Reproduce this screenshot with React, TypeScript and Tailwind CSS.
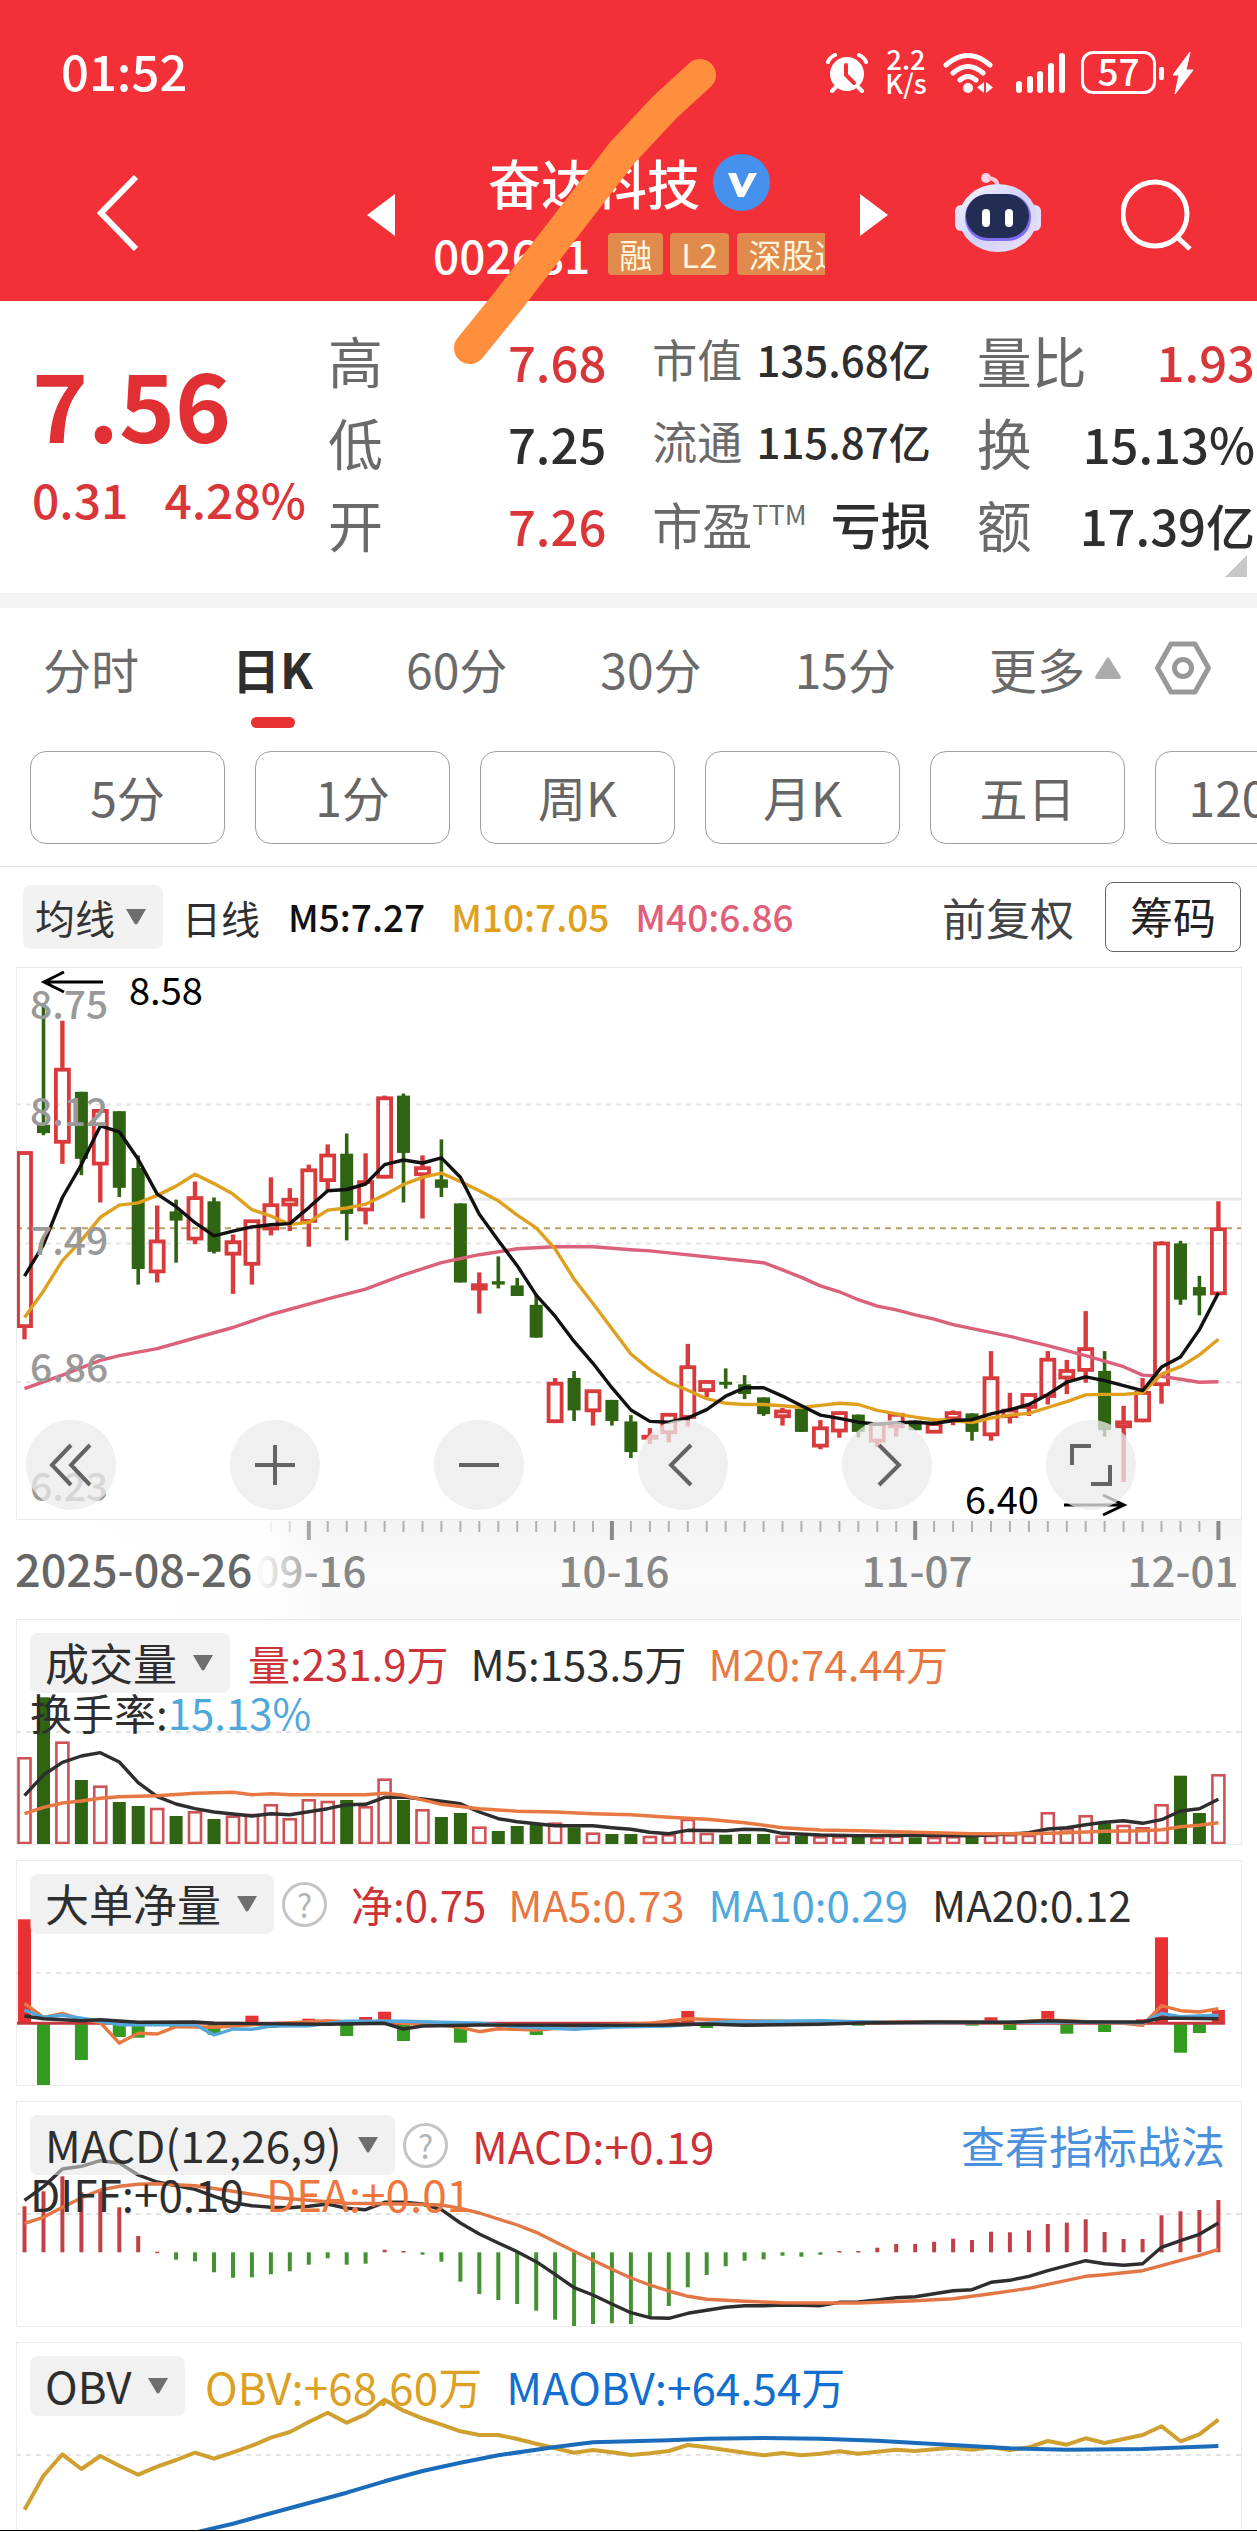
import React from "react";

type Pt = [number, number];
type Scale = (v: number) => number;

/* ---------- shared geometry ---------- */

const COUNT = 64;
const colX = (i: number) => Math.round((24.5 + i * 18.95) * 10) / 10;
const priceY: Scale = (v) => Math.round((950 + v / 2.376) * 10) / 10;
const volY: Scale = (v) => Math.round((1610 + v / 3) * 10) / 10;
const macdY: Scale = (v) => Math.round((2090 + v / 3) * 10) / 10;

const RED = "#d93a3c";
const GREEN = "#2f6412";

/* ---------- series ---------- */

// up/down, high, body top, body bottom, low
const candles: [string, number, number, number, number][] = [
  ["r", 480, 480, 896, 925], ["g", 126, 415, 435, 440], ["r", 168, 282, 458, 508], ["g", 337, 337, 496, 535],
  ["r", 380, 380, 510, 600], ["g", 383, 383, 565, 587], ["g", 488, 518, 758, 795], ["r", 607, 690, 766, 790],
  ["g", 593, 621, 643, 743], ["r", 550, 587, 688, 699], ["g", 588, 597, 717, 721], ["r", 676, 692, 724, 817],
  ["r", 642, 642, 748, 795], ["r", 540, 604, 664, 678], ["r", 566, 591, 607, 668], ["r", 510, 521, 646, 705],
  ["r", 462, 486, 549, 572], ["g", 436, 484, 627, 690], ["r", 483, 549, 619, 652], ["r", 346, 350, 541, 543],
  ["g", 341, 346, 482, 600], ["r", 488, 516, 535, 638], ["g", 450, 545, 565, 587], ["g", 602, 602, 790, 790],
  ["r", 766, 794, 807, 864], ["g", 728, 787, 795, 804], ["g", 779, 797, 822, 822], ["g", 817, 843, 921, 921],
  ["r", 1017, 1028, 1122, 1124], ["g", 1000, 1017, 1094, 1119], ["r", 1046, 1046, 1096, 1130], ["g", 1069, 1069, 1119, 1130],
  ["g", 1105, 1120, 1193, 1207], ["r", 1136, 1154, 1160, 1174], ["r", 1100, 1102, 1148, 1170], ["r", 936, 989, 1112, 1132],
  ["r", 1022, 1024, 1048, 1062], ["g", 994, 1026, 1032, 1042], ["g", 1010, 1032, 1055, 1067], ["g", 1063, 1063, 1103, 1107],
  ["r", 1088, 1094, 1110, 1130], ["g", 1090, 1090, 1145, 1145], ["r", 1117, 1134, 1180, 1186], ["r", 1098, 1098, 1144, 1159],
  ["g", 1104, 1104, 1145, 1158], ["r", 1122, 1124, 1168, 1181], ["r", 1100, 1102, 1134, 1156], ["g", 1118, 1118, 1141, 1141],
  ["r", 1113, 1124, 1147, 1147], ["r", 1094, 1098, 1115, 1129], ["g", 1101, 1101, 1145, 1166], ["r", 953, 1015, 1153, 1166],
  ["r", 1052, 1092, 1110, 1125], ["r", 1055, 1055, 1088, 1107], ["r", 953, 971, 1062, 1080], ["r", 974, 998, 1018, 1055],
  ["r", 858, 946, 1000, 1028], ["g", 953, 1000, 1141, 1156], ["r", 1083, 1120, 1134, 1264], ["r", 1017, 1050, 1120, 1122],
  ["r", 692, 695, 1034, 1078], ["g", 691, 697, 831, 843], ["g", 774, 801, 821, 868], ["r", 597, 661, 818, 820],
];

const seq = (values: number[]): Pt[] => values.map((v, i) => [i, v]);

const ma5 = seq([
  775, 700, 588, 510, 418, 432, 497, 580, 610, 648, 679, 668, 658, 653, 650, 612, 572, 569, 556, 510, 499, 506, 494, 540,
  628, 690, 750, 820, 870, 930, 982, 1040, 1093, 1120, 1122, 1112, 1092, 1060, 1040, 1040, 1060, 1083, 1105, 1113, 1122,
  1127, 1123, 1122, 1125, 1118, 1116, 1102, 1092, 1080, 1056, 1027, 1014, 1023, 1035, 1047, 991, 967, 902, 815,
]);
const ma10 = seq([
  873, 810, 738, 690, 635, 606, 601, 583, 561, 533, 555, 580, 617, 632, 652, 647, 618, 613, 604, 582, 557, 540, 530, 550,
  572, 596, 630, 660, 710, 782, 840, 900, 960, 997, 1027, 1046, 1066, 1077, 1080, 1080, 1083, 1087, 1082, 1077, 1080,
  1094, 1102, 1110, 1116, 1118, 1123, 1112, 1105, 1101, 1087, 1073, 1057, 1056, 1056, 1052, 1008, 990, 962, 925,
]);
const ma40: Pt[] = [
  [0, 1042], [2, 1010], [4, 975], [5, 964], [7, 947], [9, 922], [11, 897], [13, 866], [16, 829], [18, 806], [20, 772],
  [22, 743], [24, 724], [26, 710], [28, 705], [30, 705], [32, 712], [33, 715], [39, 743], [40, 760], [41, 778], [42, 798],
  [43, 812], [44, 831], [45, 846], [46, 855], [47, 867], [48, 877], [49, 890], [52, 918], [54, 940], [56, 964], [58, 990],
  [59, 1010], [60, 1013], [62, 1027], [63, 1026],
];

const volumes = [
  445, 262, 398, 510, 530, 576, 588, 597, 618, 607, 627, 620, 615, 586, 628, 571, 576, 570, 592, 509, 570, 601, 621, 609,
  653, 663, 648, 645, 641, 652, 671, 672, 672, 681, 676, 630, 672, 674, 672, 672, 680, 677, 682, 682, 680, 684, 680, 682,
  684, 682, 678, 678, 676, 678, 610, 658, 619, 640, 648, 655, 586, 497, 609, 496,
];
const volM5: Pt[] = [
  [0, 557], [1, 495], [2, 457], [3, 438], [4, 428], [5, 456], [6, 518], [7, 560], [8, 582], [9, 596], [10, 606], [11, 612],
  [12, 618], [13, 611], [14, 614], [15, 605], [16, 596], [17, 584], [18, 583], [19, 562], [20, 561], [21, 567], [22, 574],
  [23, 581], [24, 606], [25, 626], [26, 635], [27, 641], [28, 647], [30, 647], [31, 653], [32, 658], [33, 667], [34, 671],
  [35, 661], [37, 662], [38, 658], [39, 659], [40, 670], [42, 675], [44, 677], [47, 676], [50, 677], [52, 672], [53, 668],
  [54, 657], [55, 653], [56, 644], [57, 637], [58, 632], [59, 640], [60, 629], [61, 603], [62, 596], [63, 568],
];
const volM20: Pt[] = [
  [0, 611], [1, 592], [2, 579], [3, 573], [4, 565], [5, 560], [7, 557], [9, 550], [11, 547], [12, 554], [13, 551],
  [14, 554], [18, 554], [19, 550], [20, 556], [22, 583], [24, 596], [26, 604], [28, 606], [30, 611], [32, 614], [34, 622],
  [36, 628], [38, 638], [40, 653], [42, 660], [44, 662], [47, 667], [50, 671], [53, 671], [55, 668], [57, 664], [59, 662],
  [60, 659], [61, 650], [62, 646], [63, 638],
];

const netBars: Pt[] = [
  [0, 928], [1, 1427], [3, 1350], [5, 1281], [6, 1283], [8, 1252], [10, 1274], [12, 1217], [13, 1254], [15, 1226],
  [17, 1278], [18, 1221], [19, 1205], [20, 1293], [23, 1298], [26, 1262], [27, 1275], [35, 1203], [36, 1254], [44, 1247],
  [50, 1247], [51, 1222], [52, 1260], [54, 1203], [55, 1271], [57, 1266], [59, 1228], [60, 982], [61, 1328], [62, 1269],
  [63, 1200],
];
const net5: Pt[] = [
  [0, 1180], [1, 1222], [2, 1210], [3, 1228], [4, 1238], [5, 1299], [6, 1270], [7, 1272], [8, 1250], [10, 1252],
  [12, 1244], [16, 1232], [18, 1238], [19, 1232], [20, 1240], [22, 1246], [23, 1252], [24, 1265], [25, 1256], [27, 1260],
  [29, 1250], [33, 1240], [35, 1226], [38, 1232], [42, 1236], [48, 1236], [52, 1238], [54, 1230], [58, 1240], [59, 1246],
  [60, 1187], [61, 1202], [62, 1206], [63, 1196],
];
const net10: Pt[] = [
  [0, 1200], [1, 1222], [2, 1216], [4, 1234], [5, 1244], [9, 1244], [10, 1275], [11, 1257], [12, 1258], [13, 1248],
  [15, 1247], [17, 1234], [20, 1234], [24, 1240], [26, 1250], [29, 1258], [31, 1251], [34, 1248], [37, 1236], [42, 1232],
  [46, 1238], [55, 1236], [59, 1238], [60, 1210], [61, 1220], [63, 1216],
];
const net20: Pt[] = [
  [0, 1218], [1, 1226], [3, 1232], [4, 1229], [6, 1237], [9, 1236], [10, 1240], [16, 1243], [19, 1240], [20, 1257],
  [21, 1248], [24, 1245], [30, 1246], [34, 1245], [36, 1242], [38, 1246], [42, 1243], [44, 1239], [48, 1236], [52, 1237],
  [54, 1232], [56, 1236], [59, 1236], [60, 1224], [63, 1226],
];

const macdBars = [
  352, 307, 262, 310, 305, 355, 441, 488, 512, 517, 550, 566, 565, 556, 547, 527, 508, 527, 524, 482, 486, 497, 518, 578,
  615, 633, 645, 665, 692, 712, 705, 703, 705, 685, 651, 595, 558, 532, 515, 511, 500, 503, 497, 486, 486, 476, 465, 465,
  458, 449, 453, 428, 430, 424, 405, 401, 391, 429, 450, 450, 379, 367, 363, 333,
];
const diff = seq([
  334, 293, 240, 232, 215, 222, 258, 279, 290, 301, 322, 341, 350, 355, 356, 352, 345, 358, 362, 340, 340, 345, 362, 402,
  435, 462, 488, 518, 556, 596, 618, 645, 671, 686, 688, 673, 664, 655, 650, 650, 648, 649, 650, 640, 639, 633, 626, 623,
  614, 605, 602, 580, 574, 562, 545, 530, 515, 524, 529, 524, 475, 455, 436, 402,
]);
const dea: Pt[] = [
  [0, 403], [1, 385], [2, 355], [3, 327], [4, 303], [5, 292], [6, 286], [7, 284], [8, 287], [9, 290], [11, 307], [13, 325],
  [15, 334], [17, 343], [20, 345], [22, 348], [23, 358], [24, 372], [26, 408], [27, 430], [28, 458], [29, 487], [30, 514],
  [31, 541], [32, 567], [33, 588], [34, 606], [35, 622], [36, 631], [38, 637], [40, 641], [42, 642], [44, 642], [47, 635],
  [49, 629], [51, 614], [53, 598], [56, 562], [57, 557], [59, 545], [60, 530], [61, 514], [62, 499], [63, 481],
];
const obv = seq([
  1262, 1160, 1096, 1140, 1101, 1130, 1157, 1133, 1113, 1091, 1109, 1090, 1070, 1046, 1029, 999, 971, 1001, 976, 932, 965,
  988, 1007, 1027, 1038, 1038, 1050, 1064, 1078, 1091, 1083, 1090, 1098, 1093, 1086, 1068, 1075, 1083, 1091, 1099, 1092,
  1099, 1094, 1087, 1094, 1088, 1082, 1086, 1081, 1076, 1082, 1075, 1083, 1075, 1056, 1067, 1048, 1062, 1050, 1038, 1012,
  1057, 1036, 992,
]);
const maObv: Pt[] = [
  [9.2, 1328], [11, 1304], [13, 1273], [15, 1242], [17, 1211], [19, 1177], [21, 1146], [23, 1121], [25, 1099], [28, 1074],
  [30, 1060], [32, 1057], [34, 1054], [36, 1049], [39, 1047], [42, 1049], [45, 1055], [48, 1065], [52, 1078], [55, 1082],
  [59, 1080], [63, 1071],
];

/* ---------- chart parts ---------- */

function Line({ pts, y, color, w = 3.4 }: { pts: Pt[]; y: Scale; color: string; w?: number }) {
  const points = pts.map(([i, v]) => `${colX(i)},${y(v)}`).join(" ");
  return <polyline points={points} fill="none" stroke={color} strokeWidth={w} strokeLinejoin="round" />;
}

function Dashes({ y }: { y: number }) {
  return <line x1="16" x2="1242" y1={y} y2={y} stroke="#e4e4e4" strokeWidth="2" strokeDasharray="5 5" />;
}

function PriceChart() {
  const labels: Pt[] = [[8.75, 165], [8.12, 418], [7.49, 725], [6.86, 1027], [6.23, 1308]];
  return (
    <svg viewBox="17 968 1224 551" className="block w-full" role="img" aria-label="日K">
      <Dashes y={priceY(367)} />
      <Dashes y={priceY(697)} />
      <Dashes y={priceY(1027)} />
      <line x1="461" x2="1242" y1={priceY(592)} y2={priceY(592)} stroke="#e8e8e8" strokeWidth="3" />
      <line x1="16" x2="1242" y1={priceY(661)} y2={priceY(661)} stroke="#b5a268" strokeWidth="2" strokeDasharray="6 5" />
      {candles.map(([k, hi, top, bot, lo], i) => {
        const x = colX(i);
        const t = priceY(top);
        const b = priceY(bot);
        return k === "r" ? (
          <g key={i} stroke={RED} strokeWidth="3.8" fill="none">
            <line x1={x} x2={x} y1={priceY(hi)} y2={t} strokeWidth="4.4" />
            <line x1={x} x2={x} y1={b} y2={priceY(lo)} strokeWidth="4.4" />
            <rect x={x - 6.5} y={t + 1} width="13" height={Math.max(b - t - 2, 1)} />
          </g>
        ) : (
          <g key={i} fill={GREEN}>
            <rect x={x - 1.8} y={priceY(hi)} width="3.6" height={priceY(lo) - priceY(hi)} />
            <rect x={x - 6.5} y={t} width="13" height={Math.max(b - t, 3)} />
          </g>
        );
      })}
      <Line pts={ma40} y={priceY} color="#db6079" />
      <Line pts={ma10} y={priceY} color="#dfa01e" />
      <Line pts={ma5} y={priceY} color="#111111" />
      <g fill="#999999" fontSize="39" fontWeight="500">
        {labels.map(([price, v]) => (
          <text key={price} x="30" y={priceY(v)}>
            {price}
          </text>
        ))}
      </g>
      <g fill="none" stroke="#000000" strokeWidth="3">
        <path d="M103 982H44M64 972L44 982L64 992" />
        <path d="M1064 1505H1124M1103 1495L1124 1505L1103 1515" />
      </g>
      <g fill="#000000" fontSize="38">
        <text x="129" y="1005">8.58</text>
        <text x="965" y="1514">6.40</text>
      </g>
    </svg>
  );
}

function DateAxis() {
  const ticks = Array.from({ length: COUNT - 13 }, (_, k) => k + 13);
  return (
    <svg viewBox="16 1520 1226 99" className="block w-full">
      <defs>
        <linearGradient id="axisBg" x1="0" x2="0" y1="0" y2="1">
          <stop offset="0" stopColor="#f3f3f3" />
          <stop offset="0.5" stopColor="#fafafa" />
          <stop offset="1" stopColor="#f9f9f9" />
        </linearGradient>
        <linearGradient id="axisFade" x1="0" x2="1" y1="0" y2="0">
          <stop offset="0" stopColor="#ffffff" />
          <stop offset="0.79" stopColor="#ffffff" stopOpacity="0.94" />
          <stop offset="1" stopColor="#ffffff" stopOpacity="0" />
        </linearGradient>
      </defs>
      <rect x="16" y="1520" width="1226" height="99" fill="url(#axisBg)" />
      {ticks.map((i) => {
        const major = i % 16 === 15;
        return (
          <line
            key={i}
            x1={colX(i)}
            x2={colX(i)}
            y1="1521"
            y2={major ? 1540 : 1532}
            stroke={major ? "#8a8a8a" : "#b0b0b0"}
            strokeWidth={major ? 4 : 2}
          />
        );
      })}
      <g fill="#878787" fontSize="42" fontWeight="500" textAnchor="middle">
        <text x="311" y="1587">09-16</text>
        <text x="614" y="1587">10-16</text>
        <text x="917" y="1587">11-07</text>
        <text x="1183" y="1587">12-01</text>
      </g>
      <rect x="16" y="1520" width="310" height="99" fill="url(#axisFade)" />
      <text x="15" y="1587" fill="#666666" fontSize="45" fontWeight="500">
        2025-08-26
      </text>
    </svg>
  );
}

function VolumeChart() {
  const base = 1845;
  return (
    <svg viewBox="17 1620 1224 224" className="block w-full" role="img" aria-label="成交量">
      <Dashes y={1732} />
      {volumes.map((v, i) => {
        const x = colX(i);
        const t = volY(v);
        return candles[i][0] === "r" ? (
          <rect key={i} x={x - 6} y={t} width="12" height={base - t - 2} fill="#ffffff" stroke="#cf5256" strokeWidth="2.6" />
        ) : (
          <rect key={i} x={x - 6.5} y={t} width="13" height={base - t} fill={GREEN} />
        );
      })}
      <Line pts={volM5} y={volY} color="#2e2e2e" />
      <Line pts={volM20} y={volY} color="#e87842" />
    </svg>
  );
}

function NetChart() {
  const zero = volY(1240);
  return (
    <svg viewBox="17 1861 1224 224" className="block w-full" role="img" aria-label="大单净量">
      <Dashes y={1973} />
      {netBars.map(([i, v]) => {
        const y = volY(v);
        const up = v < 1240;
        return (
          <rect
            key={i}
            x={colX(i) - 6.5}
            y={Math.min(y, zero)}
            width="13"
            height={Math.abs(y - zero)}
            fill={up ? "#e73132" : "#339c20"}
          />
        );
      })}
      <line x1="16" x2="1225" y1={zero} y2={zero} stroke="#c4383c" strokeWidth="3" />
      <Line pts={net5} y={volY} color="#e87842" />
      <Line pts={net10} y={volY} color="#52a8dc" />
      <Line pts={net20} y={volY} color="#2e2e2e" />
    </svg>
  );
}

function MacdChart() {
  const zero = macdY(490);
  return (
    <svg viewBox="17 2103 1224 224" className="block w-full" role="img" aria-label="MACD">
      <Dashes y={2215} />
      {macdBars.map((v, i) => {
        const y = macdY(v);
        return (
          <rect
            key={i}
            x={colX(i) - 2}
            y={Math.min(y, zero)}
            width="4"
            height={Math.max(Math.abs(y - zero), 1.5)}
            fill={v < 490 ? "#c24045" : "#459232"}
          />
        );
      })}
      <Line pts={diff} y={macdY} color="#2e2e2e" />
      <Line pts={dea} y={macdY} color="#e27645" />
    </svg>
  );
}

function ObvChart() {
  return (
    <svg viewBox="17 2344 1224 187" className="block w-full" role="img" aria-label="OBV">
      <Dashes y={2456} />
      <Line pts={obv} y={macdY} color="#cfa030" w={4} />
      <Line pts={maObv} y={macdY} color="#1a6cba" w={4} />
    </svg>
  );
}

/* ---------- small controls ---------- */

function Picker({ label, name, compact = false }: { label: string; name: string; compact?: boolean }) {
  return (
    <span className="relative inline-flex shrink-0 items-center">
      <select
        aria-label={name}
        className={
          compact
            ? "h-16 appearance-none rounded-lg bg-[#f2f2f2] pr-[48px] pl-3 text-[40px] leading-[56px] text-[#333333]"
            : "h-[60px] appearance-none rounded-lg bg-[#e6e6e6]/55 pr-[53px] pb-0.5 pl-[15px] text-[44px] leading-[56px] text-[#2e2e2e]"
        }
      >
        <option>{label}</option>
      </select>
      <svg viewBox="0 0 22 16" className="pointer-events-none absolute right-4 h-4 w-[22px]" fill="#6e6e6e">
        <path d="M1 0h20L12.500 14.500q-1.500 2-3 0z" />
      </svg>
    </span>
  );
}

function Help({ name }: { name: string }) {
  return (
    <button
      type="button"
      aria-label={name}
      className="ml-2 flex size-[45px] shrink-0 items-center justify-center rounded-full border-[3px] border-[#c4c4c4] text-[32px] leading-none text-[#b4b4b4]"
    >
      ?
    </button>
  );
}

function Panel({ chart, children, wide = false, last = false }: {
  chart: React.ReactNode;
  children: React.ReactNode;
  wide?: boolean;
  last?: boolean;
}) {
  return (
    <section
      className={
        last
          ? "relative mr-[15px] ml-4 border-x border-t border-[#ebebeb]"
          : "relative mr-[15px] mb-[15px] ml-4 border border-[#ebebeb]"
      }
    >
      {chart}
      <div className={"absolute inset-x-0 top-[13px] pr-4 pl-[13px] " + (wide ? "text-[44px]" : "text-[42px]")}>
        {children}
      </div>
    </section>
  );
}

/* ---------- header ---------- */

function StatusBar() {
  return (
    <div className="flex h-[145px] items-center pr-[62px] pl-[61px]">
      <span className="flex-1 pb-1.5 text-[49px] leading-[60px] font-medium">01:52</span>
      <svg viewBox="0 0 42 40" className="h-10 w-[42px]" fill="none" stroke="#fff" strokeWidth="4" strokeLinecap="round">
        <circle cx="21" cy="21" r="17" fill="#fff" stroke="none" />
        <path d="M2 9Q4 4 9 2M40 9Q38 4 33 2M10 34L6 38M32 34L36 38" />
        <path d="M20 12V22L28 30" stroke="#f32f38" strokeWidth="4" />
      </svg>
      <span className="ml-[17px] flex w-[42px] flex-col items-center pb-1 text-[27px] leading-[24px] font-medium">
        <span>2.2</span>
        <span>K/s</span>
      </span>
      <svg viewBox="0 0 50 40" className="ml-4 h-10 w-[50px]" fill="none" stroke="#fff" strokeWidth="5" strokeLinecap="round">
        <path d="M3 12Q25 -7 47 12M10 20Q25 7 40 20M17 27Q25 20 33 27" />
        <circle cx="25" cy="35" r="5" fill="#fff" stroke="none" />
        <path d="M41 29V40L34 34.500ZM43 29V40L50 34.500Z" fill="#fff" stroke="none" />
      </svg>
      <svg viewBox="0 0 52 40" className="ml-[22px] h-10 w-[52px]" fill="#fff">
        <rect x="1" y="28" width="6" height="12" rx="3" />
        <rect x="12" y="23" width="6" height="17" rx="3" />
        <rect x="22" y="18" width="6" height="22" rx="3" />
        <rect x="33" y="10" width="6" height="30" rx="3" />
        <rect x="44" y="0" width="6" height="40" rx="3" />
      </svg>
      <span className="ml-3.5 flex h-[43px] w-[75px] items-center justify-center rounded-xl border-[3px] border-white pb-1 text-[37px] leading-none font-medium">
        57
      </span>
      <svg viewBox="0 0 36 42" className="ml-[3px] h-[42px] w-9" fill="#fff">
        <rect x="0" y="15" width="5" height="13" rx="2" />
        <path d="M31 0L14 23H20L16 42L34 18H27Z" stroke="#fff" strokeLinejoin="round" />
      </svg>
    </div>
  );
}

function Robot() {
  return (
    <svg viewBox="0 0 86 80" className="h-20 w-[86px]">
      <defs>
        <linearGradient id="shell" x1="0" x2="1" y1="0" y2="1">
          <stop offset="0" stopColor="#fdf6fb" />
          <stop offset="0.5" stopColor="#cfd2fb" />
          <stop offset="1" stopColor="#efe0f3" />
        </linearGradient>
      </defs>
      <circle cx="31" cy="6" r="5" fill="#fbd5e3" />
      <path d="M33 6Q42 6 43 15" fill="none" stroke="#f6c8da" strokeWidth="4" />
      <rect x="0" y="33" width="12" height="26" rx="6" fill="#e3defa" />
      <rect x="74" y="33" width="12" height="26" rx="6" fill="#e3defa" />
      <ellipse cx="43" cy="46" rx="39" ry="34" fill="url(#shell)" />
      <rect x="10" y="22" width="66" height="47" rx="23" fill="#7d6cf0" />
      <rect x="11" y="22" width="63" height="44" rx="22" fill="#232c52" />
      <rect x="27" y="37" width="8" height="18" rx="4" fill="#fff" />
      <rect x="50" y="37" width="8" height="18" rx="4" fill="#fff" />
    </svg>
  );
}

function TitleBar() {
  const tag = "shrink-0 rounded-[4px] bg-[#e08b4b] text-[33px] leading-[42px] text-[#fff6df]";
  return (
    <div className="flex h-[156px] items-center pr-16 pb-3 pl-[97px]">
      <button type="button" aria-label="返回" className="pb-2">
        <svg viewBox="0 0 42 76" className="h-[76px] w-[42px]" fill="none" stroke="#fff" strokeWidth="6">
          <path d="M39 2L4 38L39 74" />
        </svg>
      </button>
      <button type="button" aria-label="上一只" className="ml-[228px] pb-1">
        <svg viewBox="0 0 28 42" className="h-[42px] w-7" fill="#fff">
          <path d="M28 0V42L0 21Z" />
        </svg>
      </button>
      <div className="ml-[38px] flex min-w-0 flex-1 flex-col gap-3.5">
        <div className="flex items-center justify-center gap-[13px]">
          <h1 className="text-[53px] leading-[60px] font-medium">奋达科技</h1>
          <svg viewBox="0 0 57 57" className="size-[57px]">
            <circle cx="28.500" cy="28.500" r="28.500" fill="#4690ee" />
            <path d="M15 19H23L29 34L36 19H44L31 43H25Z" fill="#fff" />
          </svg>
        </div>
        <div className="flex items-center overflow-hidden whitespace-nowrap">
          <span className="mr-[18px] text-[46px] leading-[56px] font-medium">002681</span>
          <span className={`${tag} mr-[7px] px-[11px]`}>融</span>
          <span className={`${tag} mr-2 px-[11px]`}>L2</span>
          <span className={`${tag} px-3`}>深股通</span>
        </div>
      </div>
      <button type="button" aria-label="下一只" className="ml-[35px] pb-1">
        <svg viewBox="0 0 28 42" className="h-[42px] w-7" fill="#fff">
          <path d="M0 0V42L28 21Z" />
        </svg>
      </button>
      <button type="button" aria-label="助手" className="ml-[67px] pb-2.5">
        <Robot />
      </button>
      <button type="button" aria-label="搜索" className="ml-[80px] pb-1">
        <svg viewBox="0 0 72 72" className="size-[72px]" fill="none" stroke="#fff" strokeWidth="5">
          <circle cx="34" cy="35" r="32" />
          <path d="M56 58L69 70" />
        </svg>
      </button>
    </div>
  );
}

/* ---------- quote ---------- */

function Stat({ label, value, mid = false, red = false }: { label: string; value: string; mid?: boolean; red?: boolean }) {
  return (
    <div className="flex h-[82px] items-center justify-between whitespace-nowrap">
      <dt className={mid ? "text-[45px] leading-[64px] text-[#6a6a6a]" : "text-[55px] leading-[64px] text-[#6a6a6a]"}>
        {label}
      </dt>
      <dd
        className={
          (mid ? "text-[42px] leading-[64px] font-medium " : "pt-1 text-[49px] leading-[64px] font-medium ") +
          (red ? "text-[#d9363a]" : "text-[#2e2e2e]")
        }
      >
        {value}
      </dd>
    </div>
  );
}

function Quote() {
  return (
    <section className="relative flex h-[292px] pt-[17px] pr-0.5 pl-8">
      <div className="w-[296px] pt-8 whitespace-nowrap text-[#e03034]">
        <div className="text-[95px] leading-[104px] font-bold">7.56</div>
        <div className="mt-3 flex gap-9 text-[48px] leading-[64px] font-medium text-[#d9363a]">
          <span>0.31</span>
          <span>4.28%</span>
        </div>
      </div>
      <dl className="grid flex-1 auto-rows-min grid-cols-3 gap-x-[46px]">
        <Stat label="高" value="7.68" red />
        <Stat label="市值" value="135.68亿" mid />
        <Stat label="量比" value="1.93" red />
        <Stat label="低" value="7.25" />
        <Stat label="流通" value="115.87亿" mid />
        <Stat label="换" value="15.13%" />
        <Stat label="开" value="7.26" red />
        <div className="flex h-[82px] items-center justify-between whitespace-nowrap">
          <dt className="flex items-start text-[50px] leading-[64px] text-[#6a6a6a]">
            市盈<span className="text-[27px] leading-[46px]">TTM</span>
          </dt>
          <dd className="text-[50px] leading-[64px] font-medium text-[#2e2e2e]">亏损</dd>
        </div>
        <Stat label="额" value="17.39亿" />
      </dl>
      <svg viewBox="0 0 22 22" className="absolute right-2.5 bottom-4 size-[22px]" fill="#c8c8c8">
        <path d="M22 0V22H0Z" />
      </svg>
    </section>
  );
}

/* ---------- period selection ---------- */

function Periods() {
  return (
    <nav className="flex h-[122px] items-center justify-between pr-[46px] pb-0.5 pl-[43px] text-[48px] leading-[64px] text-[#6a6a6a]">
      <button type="button">分时</button>
      <button type="button" aria-current="true" className="relative font-bold text-[#2e2e2e]">
        日K
        <span className="absolute -bottom-7 left-1/2 h-[11px] w-11 -translate-x-1/2 rounded-full bg-[#e73132]" />
      </button>
      <button type="button">60分</button>
      <button type="button">30分</button>
      <button type="button">15分</button>
      <div className="flex items-center">
        <button type="button" className="flex items-center gap-2.5">
          更多
          <svg viewBox="0 0 26 22" className="h-[22px] w-[26px]" fill="#ababab">
            <path d="M11.500 1.500q1.500-2.500 3 0L26 20q0 2-2 2H2q-2 0-2-2z" />
          </svg>
        </button>
        <button type="button" aria-label="设置" className="ml-[34px]">
          <svg viewBox="0 0 56 54" className="h-[54px] w-14" fill="none" stroke="#999999" strokeWidth="5" strokeLinejoin="round">
            <path d="M16 3H40L53.500 27L40 51H16L2.500 27Z" />
            <circle cx="28" cy="27" r="8.500" />
          </svg>
        </button>
      </div>
    </nav>
  );
}

function Chips() {
  return (
    <div className="mt-[21px] flex gap-[30px] overflow-hidden border-b border-[#e4e4e4] pb-[22px] pl-[30px]">
      {["5分", "1分", "周K", "月K", "五日", "120分"].map((t) => (
        <button
          key={t}
          type="button"
          className="h-[93px] w-[195px] shrink-0 rounded-2xl border border-[#a0a0a0] pb-1 text-[48px] leading-[64px] text-[#666666]"
        >
          {t}
        </button>
      ))}
    </div>
  );
}

function RoundButton({ label, d }: { label: string; d: string }) {
  return (
    <button
      type="button"
      aria-label={label}
      className="flex size-[90px] items-center justify-center rounded-full bg-[#ebebeb]/75"
    >
      <svg viewBox="0 0 44 44" className="size-11" fill="none" stroke="#646464" strokeWidth="4">
        <path d={d} />
      </svg>
    </button>
  );
}

export default function App() {
  return (
    <main className="relative overflow-hidden border-b border-black bg-white font-['Noto_Sans_CJK_SC',sans-serif] text-[#2e2e2e]">
      <header className="bg-[#f32f38] text-white">
        <StatusBar />
        <TitleBar />
      </header>
      <svg
        viewBox="0 0 290 320"
        className="pointer-events-none absolute top-[50px] left-[440px] h-[320px] w-[290px]"
        fill="none"
        stroke="#ff8f3c"
        strokeWidth="32"
        strokeLinecap="round"
        strokeLinejoin="round"
      >
        <path d="M30 298L68 251L125 177L182 103L225 57L260 25" />
      </svg>

      <Quote />
      <div className="h-[15px] bg-[#f4f4f4]" />
      <Periods />
      <Chips />

      <div className="flex h-[100px] items-center pr-4 pl-[23px] text-[37px] whitespace-nowrap">
        <Picker label="均线" name="均线类型" compact />
        <span className="ml-[19px] text-[39px]">日线</span>
        <span className="ml-[28px] font-medium text-[#111111]">M5:7.27</span>
        <span className="ml-[26px] font-medium text-[#dfa01e]">M10:7.05</span>
        <span className="ml-[26px] font-medium text-[#e0607a]">M40:6.86</span>
        <button type="button" className="ml-auto text-[44px] leading-[64px] text-[#444444]">
          前复权
        </button>
        <button
          type="button"
          className="ml-[31px] h-[70px] w-[136px] rounded-lg border border-[#666666] pb-1 text-[43px] leading-[64px] text-[#222222]"
        >
          筹码
        </button>
      </div>

      <section className="relative mr-[15px] ml-4 border border-[#ebebeb]">
        <PriceChart />
        <div className="absolute bottom-[9px] left-[9px] flex gap-[114px]">
          <RoundButton label="最早" d="M22 2L3 22L22 42M41 2L22 22L41 42" />
          <RoundButton label="放大" d="M22 2V42M2 22H42" />
          <RoundButton label="缩小" d="M2 22H42" />
          <RoundButton label="左移" d="M30 2L10 22L30 42" />
          <RoundButton label="右移" d="M14 2L34 22L14 42" />
          <RoundButton label="全屏" d="M3 22V3H22M41 22V41H22" />
        </div>
      </section>
      <div className="mr-[15px] ml-4">
        <DateAxis />
      </div>

      <Panel chart={<VolumeChart />}>
        <div className="flex items-center gap-[22px] leading-[60px] whitespace-nowrap">
          <Picker label="成交量" name="指标一" />
          <span className="-ml-1 text-[#cc3338]">量:231.9万</span>
          <span>M5:153.5万</span>
          <span className="text-[#e87842]">M20:74.44万</span>
        </div>
        <div className="leading-[38px]">
          换手率:<span className="text-[#4fa8dc]">15.13%</span>
        </div>
      </Panel>

      <Panel chart={<NetChart />}>
        <div className="flex items-center leading-[60px] whitespace-nowrap">
          <Picker label="大单净量" name="指标二" />
          <Help name="大单净量说明" />
          <span className="ml-6 text-[#cc3338]">净:0.75</span>
          <span className="ml-[22px] text-[#e87842]">MA5:0.73</span>
          <span className="ml-6 text-[#4fa8dc]">MA10:0.29</span>
          <span className="ml-6">MA20:0.12</span>
        </div>
      </Panel>

      <Panel chart={<MacdChart />} wide>
        <div className="flex items-center leading-[60px] whitespace-nowrap">
          <Picker label="MACD(12,26,9)" name="指标三" />
          <Help name="MACD说明" />
          <span className="ml-6 text-[#cc3338]">MACD:+0.19</span>
          <a href="#tactics" className="ml-auto text-[#4a90dc]">
            查看指标战法
          </a>
        </div>
        <div className="flex gap-[22px] leading-[36px]">
          <span>DIFF:+0.10</span>
          <span className="text-[#ee7740]">DEA:+0.01</span>
        </div>
      </Panel>

      <Panel chart={<ObvChart />} wide last>
        <div className="flex items-center gap-6 leading-[60px] whitespace-nowrap">
          <Picker label="OBV" name="指标四" />
          <span className="-ml-1 text-[#dca022]">OBV:+68.60万</span>
          <span className="text-[#126fd0]">MAOBV:+64.54万</span>
        </div>
      </Panel>
    </main>
  );
}
